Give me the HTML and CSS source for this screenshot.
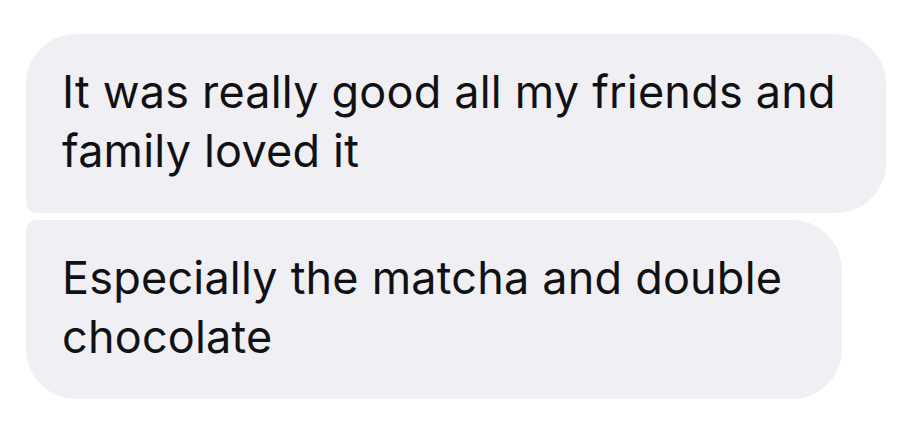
FILE: index.html
```html
<!DOCTYPE html>
<html lang="en">
<head>
<meta charset="utf-8">
<title>Messages</title>
<link rel="stylesheet" href="styles.css">
</head>
<body>
<div class="thread">
  <div class="bubble first">It was really good all my friends and family loved it</div>
  <div class="bubble last">Especially the matcha and double chocolate</div>
</div>
</body>
</html>
```
FILE: styles.css
```css
html, body {
  margin: 0;
  background: #ffffff;
}
.thread {
  display: flex;
  flex-direction: column;
  align-items: flex-start;
  gap: 7px;
  padding: 34px 0 0 26px;
  font-family: Inter, "Noto Sans", sans-serif;
}
.bubble {
  box-sizing: border-box;
  padding: 28px 40px 33px 36px;
  background: #efeff4;
  color: #111113;
  font-size: 45px;
  letter-spacing: 0.2px;
  line-height: 59px;
  border-radius: 50px;
}
.bubble.first {
  width: 860px;
  border-bottom-left-radius: 10px;
}
.bubble.last {
  width: 816px;
  border-top-left-radius: 10px;
}
```
